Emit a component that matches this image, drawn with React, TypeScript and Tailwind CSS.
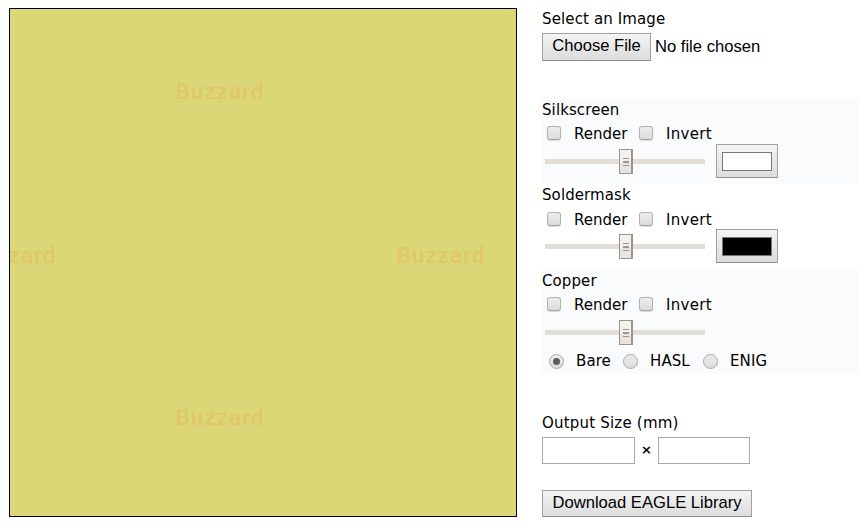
import React from "react";

const BUTTON =
  "border border-[#a0a0a0] border-b-[#8e8e8e] bg-linear-to-b from-[#f4f4f4] to-[#dcdcdc] font-['Liberation_Sans',Arial,sans-serif] text-[16.6px] text-black whitespace-nowrap";

function Check({ label, labelClass }: { label: string; labelClass: string }) {
  return (
    <label className="flex items-start">
      <span className="mt-1 h-[14px] w-[14px] shrink-0 rounded-[3px] border border-[#b2b2b2] border-b-[#a2a2a2] bg-linear-to-b from-[#ececec] to-[#dcdcdc] shadow-[0_1px_1px_#dadada]" />
      <span className={`ml-[13px] leading-6 whitespace-nowrap ${labelClass}`}>{label}</span>
    </label>
  );
}

function Radio({ label, on }: { label: string; on?: boolean }) {
  return (
    <label className="-mt-px flex items-start">
      <span className="mt-[5px] flex h-[15px] w-[15px] shrink-0 items-center justify-center rounded-full border border-[#a9a9a9] bg-linear-to-b from-[#ececec] to-[#dcdcdc]">
        {on && <span className="h-[7px] w-[7px] rounded-full bg-[#5c5c5c]" />}
      </span>
      <span className="ml-3 leading-[25px] tracking-[0.1px] whitespace-nowrap">{label}</span>
    </label>
  );
}

function Slider() {
  return (
    <div className="ml-[3px] flex h-[35px] w-[160px] items-center">
      <div className="h-[5px] w-[74px] bg-[#e2ddd6]" />
      <svg width="14" height="25" viewBox="0 0 14 25" shapeRendering="crispEdges">
        <rect width="14" height="25" fill="#9c948a" />
        <rect x="1" y="1" width="11" height="13" fill="#f3f1ee" />
        <rect x="1" y="14" width="11" height="10" fill="#e9e4e0" />
        <path d="M4 9h6v1H4zM4 12h6v2H4zM4 16h6v1H4z" fill="#9c948a" />
      </svg>
      <div className="h-[5px] flex-1 bg-[#e2ddd6]" />
    </div>
  );
}

function Layer({
  title,
  titleClass,
  className,
  swatch,
  sliderClass = "",
  children,
}: {
  title: string;
  titleClass: string;
  className: string;
  swatch?: string;
  sliderClass?: string;
  children?: React.ReactNode;
}) {
  return (
    <section className={`w-[316px] ${className}`}>
      <div className={`h-6 tracking-[0.1px] ${titleClass}`}>{title}</div>
      <div className="flex h-[22px] pl-[5px]">
        <div className="w-[92px]">
          <Check label="Render" labelClass="" />
        </div>
        <Check label="Invert" labelClass="tracking-[0.3px]" />
      </div>
      <div className={`flex items-start ${sliderClass}`}>
        <Slider />
        {swatch && (
          <div className={`ml-[11px] flex h-[34px] w-[62px] items-center justify-center rounded-[1px] ${BUTTON}`}>
            <div className={`h-[19px] w-[50px] border border-[#777] ${swatch}`} />
          </div>
        )}
      </div>
      {children}
    </section>
  );
}

const MARKS = [
  [165.5, 90],
  [-42.5, 254],
  [386.5, 254],
  [165.5, 416],
];

export default function App() {
  return (
    <main className="flex h-[528px] w-[864px] overflow-hidden bg-white pt-2 pl-[9px] font-['DejaVu_Sans',Verdana,sans-serif] text-[15px] text-black">
      <div className="h-[509px] w-[508px] shrink-0 border border-black bg-[#dbd776]">
        <svg width="506" height="507" className="block font-['Roboto',sans-serif]">
          {MARKS.map(([x, y]) => (
            <text
              key={`${x}-${y}`}
              x={x}
              y={y}
              fontSize="22.5"
              fontWeight="600"
              fill="#dfc868"
              textLength="88"
              className="blur-[0.7px]"
            >
              Buzzard
            </text>
          ))}
        </svg>
      </div>
      <div className="ml-[25px] flex w-[316px] flex-col items-start">
        <div className="h-[25px] leading-[22px] tracking-[0.12px] whitespace-nowrap">Select an Image</div>
        <div className="flex h-[65px] items-start">
          <button className={`h-7 w-[109px] pb-0.5 ${BUTTON}`}>Choose File</button>
          <span className="ml-1 font-['Liberation_Sans',Arial,sans-serif] text-[16.6px] leading-[27px] whitespace-nowrap">
            No file chosen
          </span>
        </div>
        <Layer title="Silkscreen" titleClass="leading-6" className="h-[86px] bg-[#fafbfd]" swatch="bg-white" />
        <Layer title="Soldermask" titleClass="leading-[22px]" className="h-[85px]" swatch="bg-black" sliderClass="-mt-px" />
        <Layer title="Copper" titleClass="leading-6" className="h-[105px] bg-[#fafbfd]">
          <div className="flex pl-[7px]">
            <div className="w-[74px]">
              <Radio label="Bare" on />
            </div>
            <div className="w-[80px]">
              <Radio label="HASL" />
            </div>
            <Radio label="ENIG" />
          </div>
        </Layer>
        <div className="mt-[37px] h-[26px] leading-6 tracking-[0.2px] whitespace-nowrap">Output Size (mm)</div>
        <div className="flex h-[27px]">
          <input aria-label="Width" className="h-[27px] w-[93px] border border-[#a9a9a9] bg-white" />
          <span className="w-[23px] text-center text-[13px] leading-[25px] font-bold">×</span>
          <input aria-label="Height" className="h-[27px] w-[92px] border border-[#a9a9a9] bg-white" />
        </div>
        <button className={`mt-[26px] h-[27px] w-[210px] pb-0.5 ${BUTTON}`}>Download EAGLE Library</button>
      </div>
    </main>
  );
}
